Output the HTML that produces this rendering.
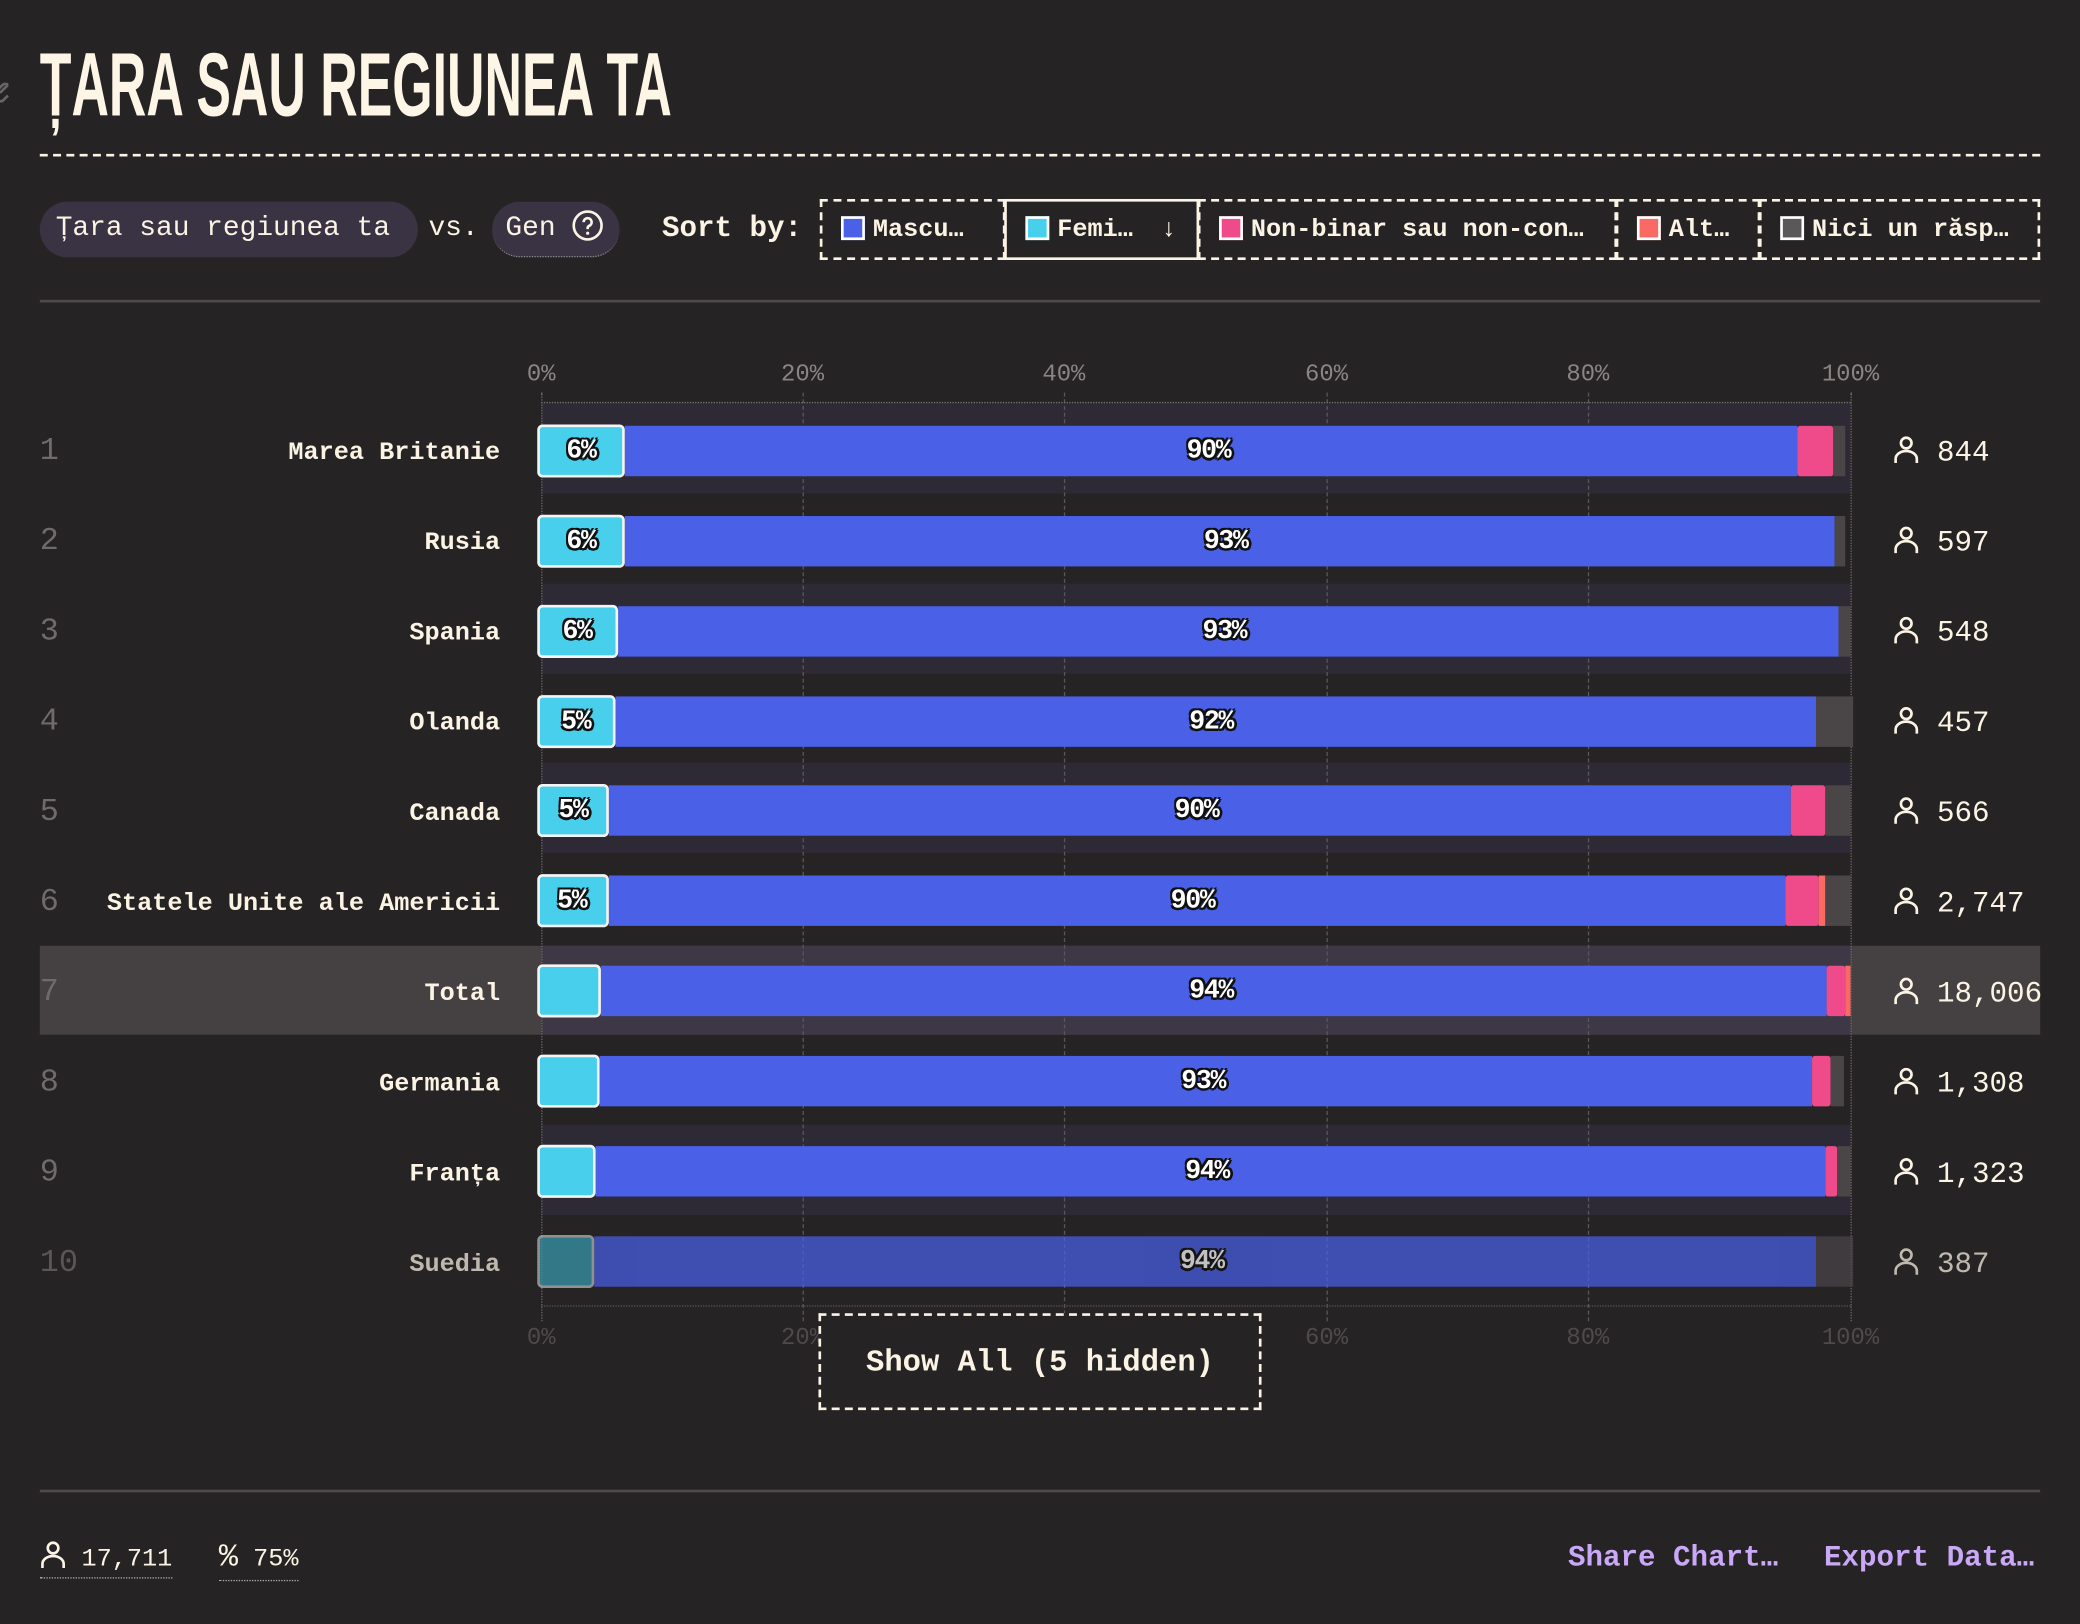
<!DOCTYPE html>
<html><head><meta charset="utf-8"><style>
html,body{margin:0;padding:0;background:#262324;width:2080px;height:1624px;overflow:hidden}
#w{position:absolute;left:0;top:0;width:1568px;height:1224px;transform:scale(1.326531);transform-origin:0 0;font-family:"Liberation Mono",monospace;color:#fbf3e4}
.a{position:absolute}
.title{left:30px;top:26px;font-family:"Liberation Sans Narrow","Liberation Sans",sans-serif;font-weight:bold;font-size:68px;color:#fdf5e6;transform:scaleX(0.575);transform-origin:0 0;white-space:nowrap;line-height:76px}
.pill{background:#3a3343;border-radius:22px;height:42px;line-height:42px;font-size:21px;padding:0 10px;box-sizing:border-box;white-space:nowrap}
.btn{top:150px;height:46px;border:2px dashed #fbf3e4;box-sizing:border-box;font-weight:bold;font-size:19px;line-height:42px;padding-left:14px;white-space:nowrap}
.sw{display:inline-block;width:14px;height:14px;border:2px solid #fff;vertical-align:-3px;margin-right:6px}
.rank{left:30px;font-size:24px;color:#6f6b6b;width:40px;margin-top:3px}
.lab{right:1191px;font-weight:bold;font-size:19px;text-align:right;white-space:nowrap;margin-top:2px}
.band{left:408px;width:987px;height:68px;background:#2e2a35}
.seg{position:absolute;top:0;height:38px}
.cy{background:#47cfec;border:2px solid #f4f4f4;border-radius:4px;box-sizing:border-box;left:-3px;top:-1px;height:40px;z-index:2}
.bl{background:#4960e7}
.pk{background:#ef4b8b;border-radius:2px}
.co{background:#fa6a64}
.gr{background:#4a4648}
.bt{position:absolute;top:0;height:38px;line-height:40px;font-weight:bold;font-size:20px;color:#fff;text-shadow:-1.5px -1.5px 0 #111,1.5px -1.5px 0 #111,-1.5px 1.5px 0 #111,1.5px 1.5px 0 #111,0 2px 0 #111,2px 0 0 #111;z-index:3;transform:translateX(-50%);white-space:nowrap;letter-spacing:-1px}
.cnt{left:1427px;font-size:22px;white-space:nowrap;margin-top:2px}
.ax{font-size:18px;color:#8a8484;transform:translateX(-50%)}
.vg{width:0;border-left:1px dashed #5a5558}
</style></head><body><div id="w">
<svg class="a" style="left:-4px;top:56px" width="20" height="22" viewBox="0 0 20 22"><path d="M4 14l6-6M2 12l4-4a3 3 0 0 1 4 0M10 16l-4 4a3 3 0 0 1-4-4" fill="none" stroke="#666" stroke-width="2"/></svg>
<div class="a title">ȚARA SAU REGIUNEA TA</div>
<div class="a" style="left:30px;top:116px;width:1508px;border-top:2px dashed #fbf3e4"></div>

<div class="a pill" style="left:30px;top:152px;width:285px;padding-left:12px">Țara sau regiunea ta</div>
<div class="a" style="left:323px;top:152px;line-height:42px;font-size:21px">vs.</div>
<div class="a pill" style="left:371px;top:152px;width:96px;border-bottom:1px dotted #888">Gen <svg style="vertical-align:-5px" width="24" height="24" viewBox="0 0 24 24"><circle cx="12" cy="12" r="10.5" fill="none" stroke="#fbf3e4" stroke-width="2"/><path d="M9 9.5a3 3 0 1 1 4 2.8c-.8.4-1 1-1 1.8v.6" fill="none" stroke="#fbf3e4" stroke-width="2"/><circle cx="12" cy="17.8" r="1.2" fill="#fbf3e4"/></svg></div>
<div class="a" style="left:499px;top:152px;line-height:42px;font-size:22px;font-weight:bold">Sort by:</div>
<div class="a btn" style="left:618px;width:140px"><span class="sw" style="background:#4960e7"></span>Mascu…</div>
<div class="a btn" style="left:757px;width:147px;border-style:solid"><span class="sw" style="background:#47cfec"></span>Femi… <span style="margin-left:10px">↓</span></div>
<div class="a btn" style="left:903px;width:316px"><span class="sw" style="background:#ef4b8b"></span>Non-binar sau non-con…</div>
<div class="a btn" style="left:1218px;width:109px"><span class="sw" style="background:#fa6a64"></span>Alt…</div>
<div class="a btn" style="left:1326px;width:212px"><span class="sw" style="background:#5b5859"></span>Nici un răsp…</div>
<div class="a" style="left:30px;top:226px;width:1508px;border-top:2px solid #4e4a4b"></div>

<div class="a ax" style="left:408px;top:273px">0%</div>
<div class="a ax" style="left:605px;top:273px">20%</div>
<div class="a ax" style="left:802px;top:273px">40%</div>
<div class="a ax" style="left:1000px;top:273px">60%</div>
<div class="a ax" style="left:1197px;top:273px">80%</div>
<div class="a ax" style="left:1395px;top:273px">100%</div>
<div class="a ax" style="left:408px;top:999px;color:#4e4a4b">0%</div>
<div class="a ax" style="left:605px;top:999px;color:#4e4a4b">20%</div>
<div class="a ax" style="left:802px;top:999px;color:#4e4a4b">40%</div>
<div class="a ax" style="left:1000px;top:999px;color:#4e4a4b">60%</div>
<div class="a ax" style="left:1197px;top:999px;color:#4e4a4b">80%</div>
<div class="a ax" style="left:1395px;top:999px;color:#4e4a4b">100%</div>

<div class="a band" style="top:304px"></div>
<div class="a band" style="top:440px"></div>
<div class="a band" style="top:575px"></div>
<div class="a" style="left:30px;top:713px;width:1508px;height:67px;background:#454142"></div>
<div class="a band" style="top:713px;height:67px;background:#3e3846"></div>
<div class="a band" style="top:848px"></div>

<div class="a vg" style="left:408px;top:296px;height:700px;border-left:1px dotted #6a6567"></div>
<div class="a vg" style="left:605px;top:296px;height:700px"></div>
<div class="a vg" style="left:802px;top:296px;height:700px"></div>
<div class="a vg" style="left:1000px;top:296px;height:700px"></div>
<div class="a vg" style="left:1197px;top:296px;height:700px"></div>
<div class="a vg" style="left:1395px;top:296px;height:700px;border-left:1px dotted #6a6567"></div>
<div class="a" style="left:408px;top:303px;width:987px;border-top:1px dotted #777"></div>
<div class="a" style="left:408px;top:984px;width:987px;border-top:1px dotted #555"></div>

<div class="a rank" style="top:324px">1</div><div class="a lab" style="top:328px">Marea Britanie</div>
<div class="a" style="left:408px;top:321px;width:990px;height:38px">
<div class="seg cy" style="width:66px"></div><div class="seg bl" style="left:63px;width:884px"></div><div class="seg pk" style="left:947px;width:27px"></div><div class="seg gr" style="left:974px;width:9px"></div>
<div class="bt" style="left:30px">6%</div><div class="bt" style="left:503px">90%</div></div>
<div class="a cnt" style="top:326px"><svg width="20" height="22" viewBox="0 0 20 22" style="vertical-align:-3px"><circle cx="10" cy="6" r="4" fill="none" stroke="#fbf3e4" stroke-width="2"/><path d="M2 21v-3a8 6 0 0 1 16 0v3" fill="none" stroke="#fbf3e4" stroke-width="2"/></svg> 844</div>

<div class="a rank" style="top:392px">2</div><div class="a lab" style="top:396px">Rusia</div>
<div class="a" style="left:408px;top:389px;width:990px;height:38px">
<div class="seg cy" style="width:66px"></div><div class="seg bl" style="left:63px;width:912px"></div><div class="seg gr" style="left:975px;width:8px"></div>
<div class="bt" style="left:30px">6%</div><div class="bt" style="left:516px">93%</div></div>
<div class="a cnt" style="top:394px"><svg width="20" height="22" viewBox="0 0 20 22" style="vertical-align:-3px"><circle cx="10" cy="6" r="4" fill="none" stroke="#fbf3e4" stroke-width="2"/><path d="M2 21v-3a8 6 0 0 1 16 0v3" fill="none" stroke="#fbf3e4" stroke-width="2"/></svg> 597</div>

<div class="a rank" style="top:460px">3</div><div class="a lab" style="top:464px">Spania</div>
<div class="a" style="left:408px;top:457px;width:990px;height:38px">
<div class="seg cy" style="width:61px"></div><div class="seg bl" style="left:58px;width:920px"></div><div class="seg gr" style="left:978px;width:9px"></div>
<div class="bt" style="left:27px">6%</div><div class="bt" style="left:515px">93%</div></div>
<div class="a cnt" style="top:462px"><svg width="20" height="22" viewBox="0 0 20 22" style="vertical-align:-3px"><circle cx="10" cy="6" r="4" fill="none" stroke="#fbf3e4" stroke-width="2"/><path d="M2 21v-3a8 6 0 0 1 16 0v3" fill="none" stroke="#fbf3e4" stroke-width="2"/></svg> 548</div>

<div class="a rank" style="top:528px">4</div><div class="a lab" style="top:532px">Olanda</div>
<div class="a" style="left:408px;top:525px;width:990px;height:38px">
<div class="seg cy" style="width:59px"></div><div class="seg bl" style="left:56px;width:905px"></div><div class="seg gr" style="left:961px;width:28px"></div>
<div class="bt" style="left:26px">5%</div><div class="bt" style="left:505px">92%</div></div>
<div class="a cnt" style="top:530px"><svg width="20" height="22" viewBox="0 0 20 22" style="vertical-align:-3px"><circle cx="10" cy="6" r="4" fill="none" stroke="#fbf3e4" stroke-width="2"/><path d="M2 21v-3a8 6 0 0 1 16 0v3" fill="none" stroke="#fbf3e4" stroke-width="2"/></svg> 457</div>

<div class="a rank" style="top:596px">5</div><div class="a lab" style="top:600px">Canada</div>
<div class="a" style="left:408px;top:592px;width:990px;height:38px">
<div class="seg cy" style="width:54px"></div><div class="seg bl" style="left:51px;width:891px"></div><div class="seg pk" style="left:942px;width:26px"></div><div class="seg gr" style="left:968px;width:19px"></div>
<div class="bt" style="left:24px">5%</div><div class="bt" style="left:494px">90%</div></div>
<div class="a cnt" style="top:598px"><svg width="20" height="22" viewBox="0 0 20 22" style="vertical-align:-3px"><circle cx="10" cy="6" r="4" fill="none" stroke="#fbf3e4" stroke-width="2"/><path d="M2 21v-3a8 6 0 0 1 16 0v3" fill="none" stroke="#fbf3e4" stroke-width="2"/></svg> 566</div>

<div class="a rank" style="top:664px">6</div><div class="a lab" style="top:668px">Statele Unite ale Americii</div>
<div class="a" style="left:408px;top:660px;width:990px;height:38px">
<div class="seg cy" style="width:54px"></div><div class="seg bl" style="left:51px;width:887px"></div><div class="seg pk" style="left:938px;width:25px"></div><div class="seg co" style="left:963px;width:5px"></div><div class="seg gr" style="left:968px;width:19px"></div>
<div class="bt" style="left:23px">5%</div><div class="bt" style="left:491px">90%</div></div>
<div class="a cnt" style="top:666px"><svg width="20" height="22" viewBox="0 0 20 22" style="vertical-align:-3px"><circle cx="10" cy="6" r="4" fill="none" stroke="#fbf3e4" stroke-width="2"/><path d="M2 21v-3a8 6 0 0 1 16 0v3" fill="none" stroke="#fbf3e4" stroke-width="2"/></svg> 2,747</div>

<div class="a rank" style="top:732px">7</div><div class="a lab" style="top:736px">Total</div>
<div class="a" style="left:408px;top:728px;width:990px;height:38px">
<div class="seg cy" style="width:48px"></div><div class="seg bl" style="left:45px;width:924px"></div><div class="seg pk" style="left:969px;width:14px"></div><div class="seg co" style="left:983px;width:4px"></div>
<div class="bt" style="left:505px">94%</div></div>
<div class="a cnt" style="top:734px"><svg width="20" height="22" viewBox="0 0 20 22" style="vertical-align:-3px"><circle cx="10" cy="6" r="4" fill="none" stroke="#fbf3e4" stroke-width="2"/><path d="M2 21v-3a8 6 0 0 1 16 0v3" fill="none" stroke="#fbf3e4" stroke-width="2"/></svg> 18,006</div>

<div class="a rank" style="top:800px">8</div><div class="a lab" style="top:804px">Germania</div>
<div class="a" style="left:408px;top:796px;width:990px;height:38px">
<div class="seg cy" style="width:47px"></div><div class="seg bl" style="left:44px;width:914px"></div><div class="seg pk" style="left:958px;width:14px"></div><div class="seg gr" style="left:972px;width:10px"></div>
<div class="bt" style="left:499px">93%</div></div>
<div class="a cnt" style="top:802px"><svg width="20" height="22" viewBox="0 0 20 22" style="vertical-align:-3px"><circle cx="10" cy="6" r="4" fill="none" stroke="#fbf3e4" stroke-width="2"/><path d="M2 21v-3a8 6 0 0 1 16 0v3" fill="none" stroke="#fbf3e4" stroke-width="2"/></svg> 1,308</div>

<div class="a rank" style="top:868px">9</div><div class="a lab" style="top:872px">Franța</div>
<div class="a" style="left:408px;top:864px;width:990px;height:38px">
<div class="seg cy" style="width:44px"></div><div class="seg bl" style="left:41px;width:927px"></div><div class="seg pk" style="left:968px;width:9px"></div><div class="seg gr" style="left:977px;width:10px"></div>
<div class="bt" style="left:502px">94%</div></div>
<div class="a cnt" style="top:870px"><svg width="20" height="22" viewBox="0 0 20 22" style="vertical-align:-3px"><circle cx="10" cy="6" r="4" fill="none" stroke="#fbf3e4" stroke-width="2"/><path d="M2 21v-3a8 6 0 0 1 16 0v3" fill="none" stroke="#fbf3e4" stroke-width="2"/></svg> 1,323</div>

<div style="opacity:0.72">
<div class="a rank" style="top:936px">10</div><div class="a lab" style="top:940px">Suedia</div>
<div class="a" style="left:408px;top:932px;width:990px;height:38px">
<div class="seg cy" style="width:43px;background:#3a9aae;border-color:#bbb"></div><div class="seg bl" style="left:40px;width:921px"></div><div class="seg gr" style="left:961px;width:28px"></div>
<div class="bt" style="left:498px">94%</div></div>
<div class="a cnt" style="top:938px"><svg width="20" height="22" viewBox="0 0 20 22" style="vertical-align:-3px"><circle cx="10" cy="6" r="4" fill="none" stroke="#fbf3e4" stroke-width="2"/><path d="M2 21v-3a8 6 0 0 1 16 0v3" fill="none" stroke="#fbf3e4" stroke-width="2"/></svg> 387</div>
</div>

<div class="a" style="left:617px;top:990px;width:334px;height:73px;border:2px dashed #fbf3e4;box-sizing:border-box;background:#262324;text-align:center;font-weight:bold;font-size:23px;line-height:70px">Show All (5 hidden)</div>

<div class="a" style="left:30px;top:1123px;width:1508px;border-top:2px solid #4e4a4b"></div>
<div class="a" style="left:30px;top:1161px;font-size:19px;border-bottom:1px dotted #aaa;padding-bottom:3px;white-space:nowrap"><svg width="20" height="22" viewBox="0 0 20 22" style="vertical-align:-3px"><circle cx="10" cy="6" r="4" fill="none" stroke="#fbf3e4" stroke-width="2"/><path d="M2 21v-3a8 6 0 0 1 16 0v3" fill="none" stroke="#fbf3e4" stroke-width="2"/></svg> 17,711</div>
<div class="a" style="left:165px;top:1161px;font-size:19px;border-bottom:1px dotted #aaa;padding-bottom:3px;white-space:nowrap"><span style="font-size:24px">%</span> 75%</div>
<div class="a" style="left:1182px;top:1162px;font-size:22px;font-weight:bold;color:#c9a8f7;white-space:nowrap">Share Chart…</div>
<div class="a" style="left:1375px;top:1162px;font-size:22px;font-weight:bold;color:#c9a8f7;white-space:nowrap">Export Data…</div>
</div></body></html>
